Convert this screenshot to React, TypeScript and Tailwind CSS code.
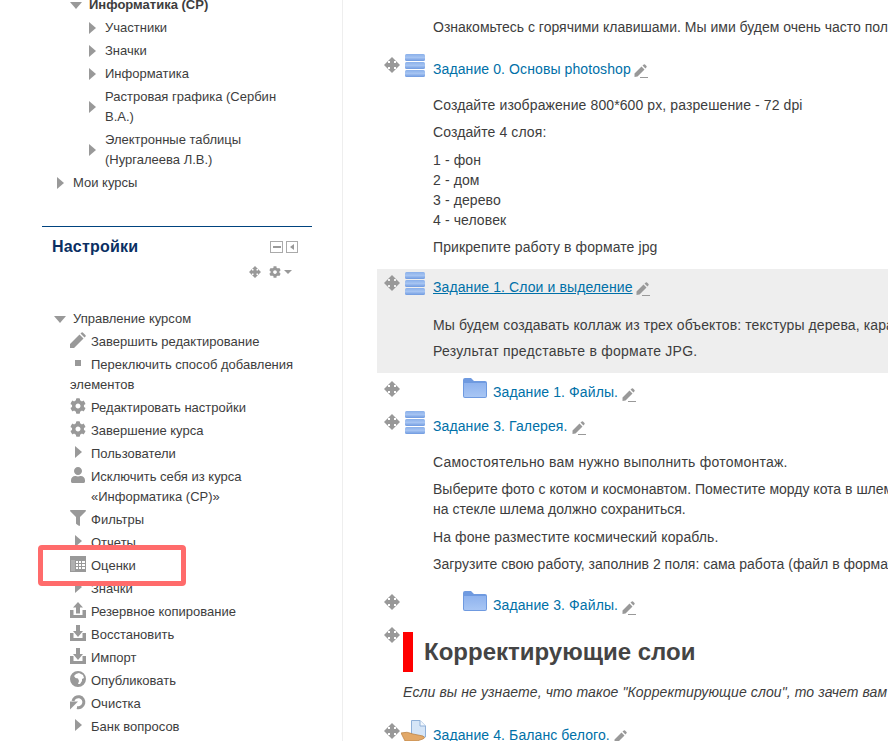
import { ReactNode } from 'react';
import { FaCog, FaFilter, FaUser } from 'react-icons/fa';

const Arrow = ({ className = '' }: { className?: string }) => (
    <svg width="7" height="12" viewBox="0 0 7 12" className={`fill-[#999] ${className}`}>
        <path d="M0 0 L7 6 L0 12 Z" />
    </svg>
);

const ArrowDown = ({ className = '' }: { className?: string }) => (
    <svg width="12" height="7" viewBox="0 0 12 7" className={`fill-[#999] ${className}`}>
        <path d="M0 0 H12 L6 7 Z" />
    </svg>
);

const MoveIcon = ({ size = 16, className = '' }: { size?: number; className?: string }) => (
    <svg width={size} height={size} viewBox="0 0 16 16" className={`shrink-0 fill-[#999] ${className}`}>
        <path d="M8 0 L12 4 H10 V6 H12 V4 L16 8 L12 12 V10 H10 V12 H12 L8 16 L4 12 H6 V10 H4 V12 L0 8 L4 4 V6 H6 V4 H4 Z" />
    </svg>
);

const Pencil = ({ size = 14, className = '' }: { size?: number; className?: string }) => (
    <svg width={size} height={size} viewBox="0 0 14 14" className={`shrink-0 fill-[#999] ${className}`}>
        <path d="M0.5 9.5 L7.5 2.5 L10.5 5.5 L3.5 12.5 L0.5 13 Z M8.5 1.5 L9.8 0.4 Q10.4 0 11 0.5 L12.5 2 Q13 2.7 12.5 3.2 L11.4 4.5 Z M6 13 H14 V14 H6 Z" />
    </svg>
);

const EditIcon = () => (
    <svg width="16" height="16" viewBox="0 0 16 16" className="-mt-[1px] shrink-0 fill-[#999]">
        <path d="M0 12 L9.5 2.5 L13.5 6.5 L4 16 L0 16 Z M10.5 1.5 L11.6 0.4 Q12.2 0 12.8 0.4 L15.6 3.2 Q16 3.8 15.6 4.4 L14.5 5.5 Z" />
    </svg>
);

const ModuleIcon = ({ className = '' }: { className?: string }) => (
    <svg width="20" height="23" viewBox="0 0 20 23" className={`shrink-0 ${className}`}>
        <defs>
            <linearGradient id="bar" x1="0" y1="0" x2="0" y2="1">
                <stop offset="0" stopColor="#8ab0ea" />
                <stop offset="0.5" stopColor="#a6c4f2" />
                <stop offset="1" stopColor="#6f9ae0" />
            </linearGradient>
        </defs>
        <rect x="0" y="0" width="20" height="7" rx="1.5" fill="url(#bar)" />
        <rect x="0" y="8" width="20" height="7" rx="1.5" fill="url(#bar)" />
        <rect x="0" y="16" width="20" height="7" rx="1.5" fill="url(#bar)" />
    </svg>
);

const FolderIcon = () => (
    <svg width="24" height="20" viewBox="0 0 24 20" className="shrink-0">
        <defs>
            <linearGradient id="folder" x1="0" y1="0" x2="0" y2="1">
                <stop offset="0" stopColor="#8fb3ee" />
                <stop offset="1" stopColor="#a8c6f4" />
            </linearGradient>
        </defs>
        <path d="M0 2 Q0 0 2 0 H8 L11 3 H22 Q24 3 24 5 V18 Q24 20 22 20 H2 Q0 20 0 18 Z" fill="#6f9ae0" />
        <path d="M1 5 H23 V18 Q23 19 22 19 H2 Q1 19 1 18 Z" fill="url(#folder)" />
    </svg>
);

const HandIcon = () => (
    <svg width="26" height="21" viewBox="0 0 26 21" className="shrink-0">
        <path d="M10.5 0.5 H19 L24.5 6 V17 H10.5 Z" fill="#d5e5f7" stroke="#8fb0d8" strokeWidth="1" />
        <path d="M19 0.5 V6 H24.5" fill="#f3f8fd" stroke="#8fb0d8" strokeWidth="1" />
        <path d="M0 13 Q6 11 12 14 L22 16 Q25 18 22 19 L16 21 H4 Z" fill="#e2a868" stroke="#b97f42" strokeWidth="0.7" />
    </svg>
);

const TrayIcon = ({ up = false }: { up?: boolean }) => (
    <svg width="16" height="16" viewBox="0 0 16 16" className="fill-[#999]">
        <path d="M0 8 H3.5 V13 H12.5 V8 H16 V16 H0 Z" />
        {up ? (
            <path d="M8 0 L13 5.5 H10 V11.5 H6 V5.5 H3 Z" />
        ) : (
            <path d="M6 0 H10 V6 H13 L8 12 L3 6 H6 Z" />
        )}
    </svg>
);

const GradesIcon = () => (
    <svg width="16" height="16" viewBox="0 0 16 16" className="fill-[#999]">
        <path d="M0 0 H16 V16 H0 Z" />
        <path d="M1 4 H5 V15 H1 Z" fill="#b0b0b0" />
        <path d="M6 5 H8 V7 H6 Z M9 5 H11 V7 H9 Z M12 5 H15 V7 H12 Z M6 8 H8 V10 H6 Z M9 8 H11 V10 H9 Z M12 8 H15 V10 H12 Z M6 11 H8 V13 H6 Z M9 11 H11 V13 H9 Z M12 11 H15 V13 H12 Z" fill="#fff" />
    </svg>
);

const GlobeIcon = () => (
    <svg width="16" height="16" viewBox="0 0 16 16" className="fill-[#999]">
        <path
            fillRule="evenodd"
            d="M8 0 A8 8 0 1 1 8 16 A8 8 0 0 1 8 0 Z M9 2 L6 3 L4 5 L5.5 7 L8 7.5 L9 10 L8 13 L10 13 L12 10 L12 8 L14 7 L13 4 Z"
        />
    </svg>
);

const ResetIcon = () => (
    <svg width="16" height="16" viewBox="0 0 16 16" fill="none" className="stroke-[#999]">
        <path d="M3 7 A5.5 5.5 0 1 1 7 13.5" strokeWidth="3" />
        <path d="M0 7.5 H8 L0 15.5 Z" fill="#999" stroke="none" />
    </svg>
);

const SlotIcon = ({ children }: { children: ReactNode }) => (
    <span className="inline-flex h-4 w-4 items-center justify-center align-top mr-[5px]">{children}</span>
);

const Item = ({ icon, children }: { icon: ReactNode; children: ReactNode }) => (
    <li className="h-[23px] pl-[28px] whitespace-nowrap">
        <SlotIcon>{icon}</SlotIcon>
        {children}
    </li>
);

const TreeRow = ({ children, indent }: { children: ReactNode; indent: string }) => (
    <li className={`flex items-center pb-[3px] ${indent}`}>
        <Arrow className="shrink-0 mr-[9px]" />
        <span>{children}</span>
    </li>
);

const ActivityRow = ({
    icon,
    title,
    underline = false,
    pencilGap = 'ml-[3px]',
}: {
    icon: ReactNode;
    title: string;
    underline?: boolean;
    pencilGap?: string;
}) => (
    <div className="flex h-[28px] items-start pl-[7px]">
        <MoveIcon className="mt-[3px] mr-[5px]" />
        {icon}
        <a className={`ml-[8px] mt-[5px] text-[#0070a8] whitespace-nowrap ${underline ? 'underline' : ''}`}>{title}</a>
        <Pencil className={`mt-[10px] ${pencilGap}`} />
    </div>
);

const FileRow = ({ title }: { title: string }) => (
    <div className="flex h-[28px] items-start pl-[7px]">
        <MoveIcon className="mt-[3px] mr-[63px]" />
        <FolderIcon />
        <a className="ml-[6px] mt-[4px] text-[#0070a8] whitespace-nowrap">{title}</a>
        <Pencil className="mt-[10px] ml-[4px]" />
    </div>
);

const Text = ({ children, className = 'mb-[7px]' }: { children: ReactNode; className?: string }) => (
    <p className={`pl-[56px] whitespace-nowrap ${className}`}>{children}</p>
);

export default function App() {
    return (
        <div className="relative flex h-[741px] w-[888px] overflow-hidden bg-white font-['Liberation_Sans',sans-serif] text-[14px] leading-[20px] text-[#3d3d3d]">
            <aside className="w-[343px] shrink-0 border-r border-[#eee] pl-[42px] text-[13px]">
                <ul className="-mt-[5px] w-[270px]">
                    <li className="flex h-[23px] items-center pl-[12px] pb-[3px]">
                        <ArrowDown className="ml-[16px] mr-[7px]" />
                        <b>Информатика (СР)</b>
                    </li>
                    <TreeRow indent="pl-[47px]">Участники</TreeRow>
                    <TreeRow indent="pl-[47px]">Значки</TreeRow>
                    <TreeRow indent="pl-[47px]">Информатика</TreeRow>
                    <TreeRow indent="pl-[47px]">
                        Растровая графика (Сербин
                        <br />
                        В.А.)
                    </TreeRow>
                    <TreeRow indent="pl-[47px]">
                        Электронные таблицы
                        <br />
                        (Нургалеева Л.В.)
                    </TreeRow>
                    <TreeRow indent="pl-[15px]">Мои курсы</TreeRow>
                </ul>

                <section className="mt-[30px] w-[270px] border-t border-[#00437f] pt-[8px]">
                    <div className="flex items-center justify-between pl-[10px] pr-[14px]">
                        <h2 className="text-[16px] font-bold leading-[24px] tracking-[0.2px] text-[#0a2f63]">Настройки</h2>
                        <div className="flex gap-[3px]">
                            <span className="flex h-[12px] w-[13px] items-center justify-center border border-[#aaa]">
                                <span className="h-[2px] w-[8px] bg-[#999]" />
                            </span>
                            <span className="flex h-[12px] w-[12px] items-center justify-center border border-[#aaa]">
                                <span className="h-0 w-0 border-y-[3px] border-r-[4px] border-y-transparent border-r-[#999]" />
                            </span>
                        </div>
                    </div>
                    <div className="mt-[7px] flex items-center justify-end gap-[8px] pr-[20px]">
                        <MoveIcon size={12} />
                        <span className="flex items-center gap-[3px]">
                            <FaCog className="h-[12px] w-[12px] text-[#999]" />
                            <span className="h-0 w-0 border-x-[4px] border-t-[4px] border-x-transparent border-t-[#999]" />
                        </span>
                    </div>
                </section>

                <ul className="mt-[31px] w-[270px]">
                    <li className="flex h-[23px] items-center pl-[12px] pb-[3px]">
                        <ArrowDown className="mr-[7px]" />
                        Управление курсом
                    </li>
                    <Item icon={<EditIcon />}>Завершить редактирование</Item>
                    <li className="h-[43px] pl-[28px]">
                        <SlotIcon>
                            <span className="h-[6px] w-[6px] bg-[#999]" />
                        </SlotIcon>
                        Переключить способ добавления
                        <br />
                        элементов
                    </li>
                    <Item icon={<FaCog className="h-4 w-4 text-[#999]" />}>Редактировать настройки</Item>
                    <Item icon={<FaCog className="h-4 w-4 text-[#999]" />}>Завершение курса</Item>
                    <Item icon={<Arrow />}>Пользователи</Item>
                    <li className="h-[43px] pl-[28px]">
                        <SlotIcon>
                            <FaUser className="h-4 w-4 text-[#999]" />
                        </SlotIcon>
                        Исключить себя из курса
                        <br />
                        <span className="pl-[21px]">«Информатика (СР)»</span>
                    </li>
                    <Item icon={<FaFilter className="h-4 w-4 text-[#999]" />}>Фильтры</Item>
                    <Item icon={<Arrow />}>Отчеты</Item>
                    <Item icon={<GradesIcon />}>Оценки</Item>
                    <Item icon={<Arrow />}>Значки</Item>
                    <Item icon={<TrayIcon up />}>Резервное копирование</Item>
                    <Item icon={<TrayIcon />}>Восстановить</Item>
                    <Item icon={<TrayIcon />}>Импорт</Item>
                    <Item icon={<GlobeIcon />}>Опубликовать</Item>
                    <Item icon={<ResetIcon />}>Очистка</Item>
                    <Item icon={<Arrow />}>Банк вопросов</Item>
                </ul>
            </aside>

            <main className="min-w-0 flex-1 overflow-hidden pl-[34px] pt-[17px] tracking-[0.1px]">
                <Text className="tracking-normal">Ознакомьтесь с горячими клавишами. Мы ими будем очень часто пользоваться</Text>

                <div className="mt-[17px]">
                    <ActivityRow icon={<ModuleIcon />} title="Задание 0. Основы photoshop" />
                </div>
                <div className="mt-[13px]">
                    <Text>Создайте изображение 800*600 px, разрешение - 72 dpi</Text>
                    <Text className="mb-[8px]">Создайте 4 слоя:</Text>
                    <Text className="">1 - фон</Text>
                    <Text className="">2 - дом</Text>
                    <Text className="">3 - дерево</Text>
                    <Text>4 - человек</Text>
                    <Text className="">Прикрепите работу в формате jpg</Text>
                </div>

                <div className="mt-[12px] h-[104px] bg-[#eee] pt-[3px]">
                    <ActivityRow icon={<ModuleIcon />} title="Задание 1. Слои и выделение" underline />
                    <Text className="mt-[15px] mb-[6px]">
                        Мы будем создавать коллаж из трех объектов: текстуры дерева, карандаша и листа
                    </Text>
                    <Text className="tracking-[0.24px]">Результат представьте в формате JPG.</Text>
                </div>

                <div className="mt-[5px]">
                    <FileRow title="Задание 1. Файлы." />
                </div>
                <div className="mt-[5px]">
                    <ActivityRow icon={<ModuleIcon />} title="Задание 3. Галерея." pencilGap="ml-[5px]" />
                </div>
                <div className="mt-[13px]">
                    <Text className="mb-[7px] tracking-[0.23px]">Самостоятельно вам нужно выполнить фотомонтаж.</Text>
                    <Text className="mb-[8px] tracking-normal">
                        Выберите фото с котом и космонавтом. Поместите морду кота в шлем
                        <br />
                        на стекле шлема должно сохраниться.
                    </Text>
                    <Text>На фоне разместите космический корабль.</Text>
                    <Text className="tracking-normal">Загрузите свою работу, заполнив 2 поля: сама работа (файл в формате</Text>
                </div>

                <div className="mt-[17px]">
                    <FileRow title="Задание 3. Файлы." />
                </div>

                <div className="mt-[8px] flex items-start pl-[7px] tracking-normal">
                    <MoveIcon className="mr-[3px]" />
                    <div className="mt-[5px] h-[40px] w-[10px] shrink-0 bg-[#f00]" />
                    <h3 className="ml-[11px] mt-[8px] whitespace-nowrap text-[24px] font-bold leading-[34px] text-[#444]">
                        Корректирующие слои
                    </h3>
                </div>
                <p className="mt-[10px] whitespace-nowrap pl-[26px] italic">
                    Если вы не узнаете, что такое "Корректирующие слои", то зачет вам не сдать
                </p>

                <div className="mt-[18px] flex items-start pl-[7px]">
                    <MoveIcon className="mt-[3px] mr-[1px]" />
                    <HandIcon />
                    <a className="ml-[6px] mt-[5px] whitespace-nowrap text-[#0070a8]">Задание 4. Баланс белого.</a>
                    <Pencil className="mt-[10px] ml-[4px]" />
                </div>
            </main>

            <div className="absolute left-[38px] top-[545px] h-[41px] w-[148px] rounded-[4px] border-[5px] border-[#ff6b6b]" />
        </div>
    );
}
